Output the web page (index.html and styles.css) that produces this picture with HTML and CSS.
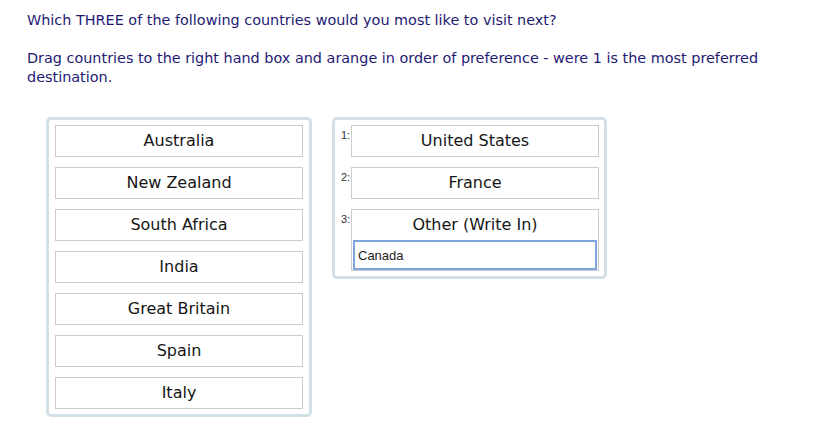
FILE: index.html
```html
<!DOCTYPE html>
<html lang="en">
<head>
  <meta charset="UTF-8">
  <title>Country preference</title>
  <link rel="stylesheet" href="styles.css">
</head>
<body>
  <div class="question">
    <p>Which THREE of the following countries would you most like to visit next?</p>
    <p>Drag countries to the right hand box and arange in order of preference - were 1 is the most preferred destination.</p>
  </div>

  <div class="boxes">
    <div class="box source">
      <div class="item">Australia</div>
      <div class="item">New Zealand</div>
      <div class="item">South Africa</div>
      <div class="item">India</div>
      <div class="item">Great Britain</div>
      <div class="item">Spain</div>
      <div class="item">Italy</div>
    </div>

    <div class="box ranked">
      <div class="row">
        <span class="rank">1:</span>
        <div class="item">United States</div>
      </div>
      <div class="row">
        <span class="rank">2:</span>
        <div class="item">France</div>
      </div>
      <div class="row">
        <span class="rank">3:</span>
        <div class="item">
          Other (Write In)
          <input type="text" class="write-in" value="Canada">
        </div>
      </div>
    </div>
  </div>
</body>
</html>
```

FILE: styles.css
```css
body {
  margin: 11px 0 0 27px;
  background: #ffffff;
  font-family: "DejaVu Sans", Verdana, sans-serif;
}
.question {
  max-width: 780px;
  color: #1e1a74;
  font-size: 14.4px;
  line-height: 19px;
}
.question p {
  margin: 0 0 19px 0;
}
.boxes {
  display: flex;
  align-items: flex-start;
  gap: 20px;
  margin: 30px 0 0 19px;
}
.box {
  border: 3px solid #d0e0e5;
  border-radius: 5px;
  background: #ffffff;
  display: flex;
  flex-direction: column;
  gap: 10px;
}
.source {
  padding: 5px 6px 5px 6px;
}
.ranked {
  padding: 5px 5px 5px 6px;
}
.item {
  width: 246px;
  border: 1px solid #cccccc;
  line-height: 30px;
  text-align: center;
  font-size: 16px;
  color: #161616;
  background: #ffffff;
}
.row {
  display: flex;
}
.rank {
  width: 10px;
  padding-top: 4px;
  font-family: "Liberation Sans", Arial, sans-serif;
  font-size: 11px;
  color: #333333;
}
.write-in {
  display: block;
  box-sizing: border-box;
  width: 244px;
  height: 30px;
  margin: 0 1px;
  padding: 0 3px;
  border: 2px solid #7ea4dc;
  outline: none;
  font-family: "Liberation Sans", Arial, sans-serif;
  font-size: 13px;
  color: #222222;
  text-align: left;
}
```
